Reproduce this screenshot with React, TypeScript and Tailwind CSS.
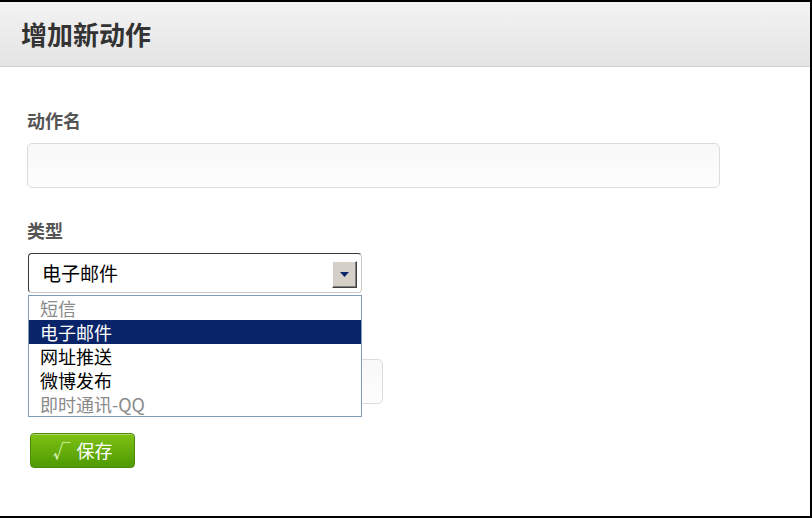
const options = [
  { label: "短信", state: "disabled" },
  { label: "电子邮件", state: "selected" },
  { label: "网址推送", state: "normal" },
  { label: "微博发布", state: "normal" },
  { label: "即时通讯-QQ", state: "disabled" },
];

const cjk = { fontFamily: '"Noto Sans CJK SC", "Liberation Sans", sans-serif' };

export default function App() {
  return (
    <div
      className="w-[812px] h-[518px] bg-white border-t-2 border-r-2 border-b-2 border-black overflow-hidden"
      style={cjk}
    >
      {/* Header */}
      <div className="h-[65px] flex items-center px-[21px] bg-gradient-to-b from-[#f3f3f3] to-[#e4e4e4] border-b border-[#cfcfcf]">
        <h1 className="text-[26px] font-bold text-[#333] leading-none">增加新动作</h1>
      </div>

      <div className="px-[27px]">
        <label className="block mt-[42px] text-[18px] leading-[22px] font-bold text-[#555]">动作名</label>
        <div className="mt-[12px] w-[693px] h-[45px] rounded-[5px] border border-[#dcdcdc] bg-gradient-to-b from-[#f8f8f8] to-[#fdfdfd]" />

        <label className="block mt-[31px] text-[18px] leading-[22px] font-bold text-[#555]">类型</label>
        <div className="relative mt-[12px] ml-px w-[334px]">
          <div className="h-[40px] flex items-center justify-between pl-[13px] pr-[4px] rounded-[4px] border border-t-[#3a3a3a] border-l-[#3a3a3a] border-r-[#c8c8c8] border-b-[#c8c8c8] bg-white">
            <span className="text-[19px] text-black">电子邮件</span>
            <div className="w-[25px] h-[27px] mt-[3px] flex items-center justify-center bg-[#d4d0c8] border border-t-white border-l-white border-r-[#404040] border-b-[#404040] shadow-[inset_-1px_-1px_0_#808080]">
              <svg width="9" height="5" viewBox="0 0 9 5">
                <path d="M0 0 H9 L4.5 5 Z" fill="#0a246a" />
              </svg>
            </div>
          </div>

          {/* Open dropdown list */}
          <ul className="absolute left-0 top-[42px] w-[334px] border border-[#7f9db9] bg-white z-10">
            {options.map((o) => (
              <li
                key={o.label}
                className={
                  "h-[24px] pl-[11px] text-[18px] leading-[24px] overflow-hidden " +
                  (o.state === "selected"
                    ? "bg-[#0a246a] text-white"
                    : o.state === "disabled"
                    ? "text-[#8a8a8a]"
                    : "text-black")
                }
              >
                {o.label}
              </li>
            ))}
          </ul>
        </div>

        <div className="mt-[66px] ml-px w-[355px] h-[45px] rounded-[5px] border border-[#dcdcdc] bg-gradient-to-b from-[#f8f8f8] to-[#fdfdfd]" />

        <button className="mt-[29px] ml-[3px] w-[105px] h-[35px] rounded-[4px] border border-[#4c8c06] bg-gradient-to-b from-[#7fc214] to-[#4e9a04] text-white text-[18px] flex items-center justify-center gap-[6px] shadow-[inset_0_1px_0_rgba(255,255,255,0.35)]">
          <span className="text-[#d8f3b0] font-bold">√</span>
          <span>保存</span>
        </button>
      </div>
    </div>
  );
}
